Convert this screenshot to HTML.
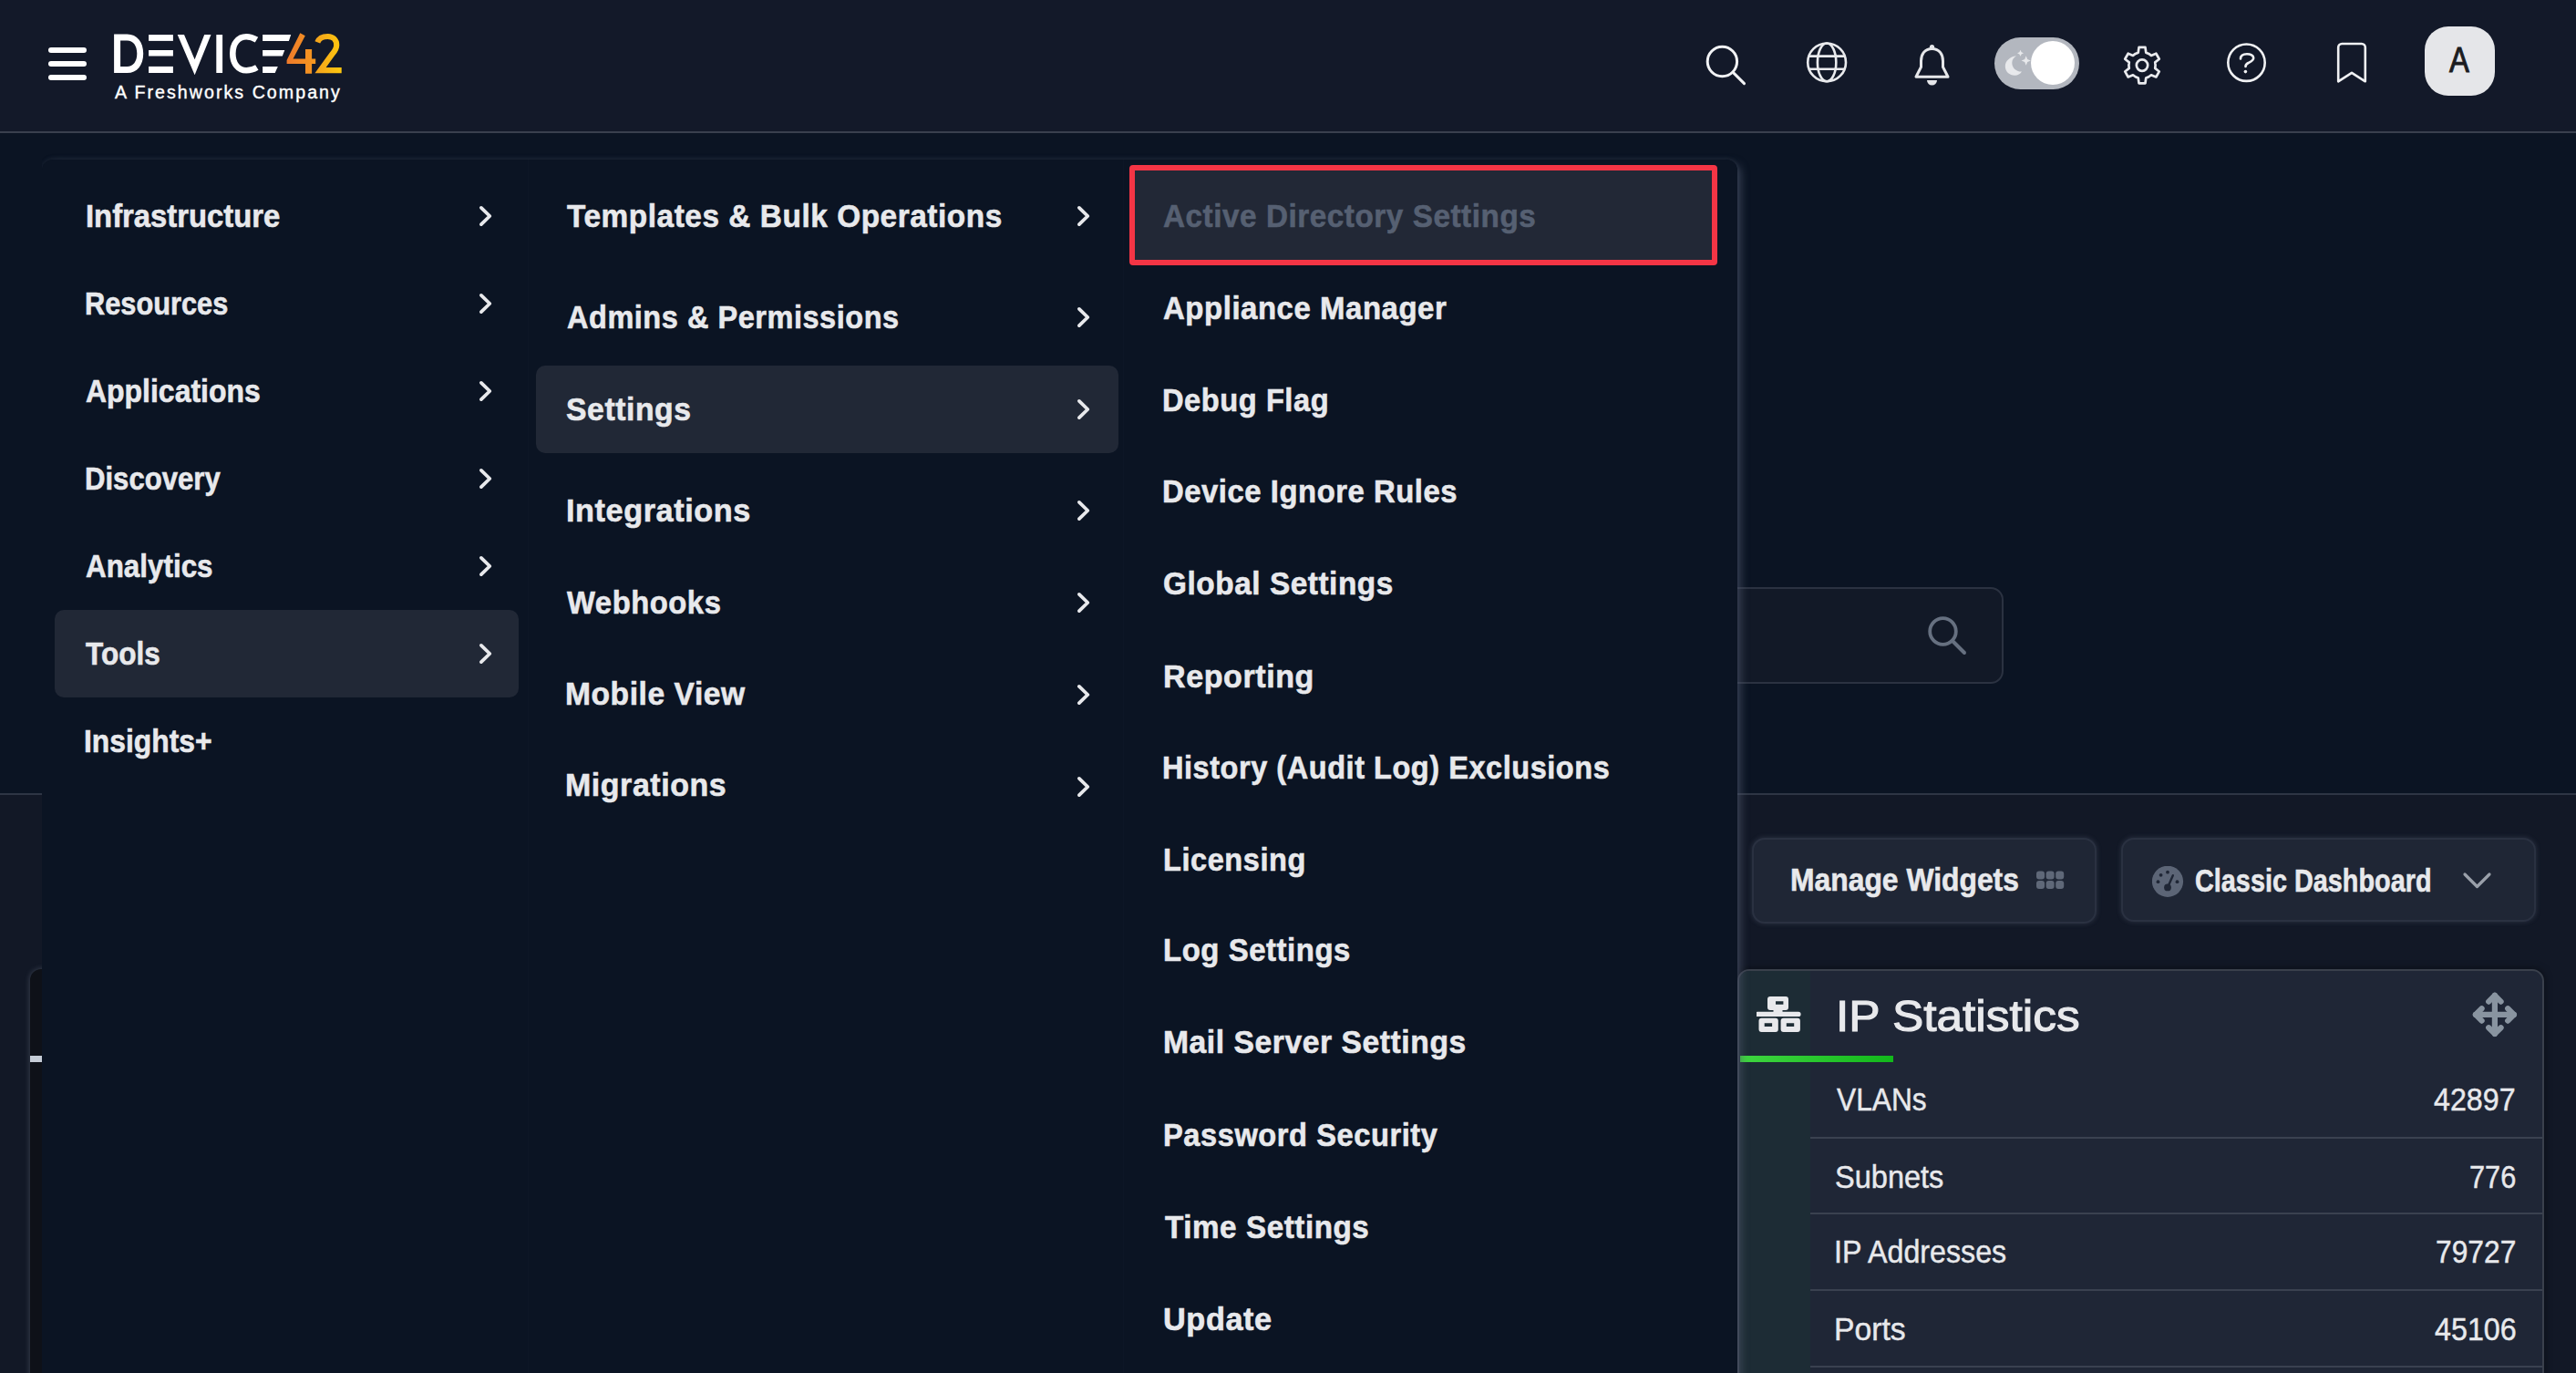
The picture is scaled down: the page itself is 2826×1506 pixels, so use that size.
<!DOCTYPE html>
<html><head><meta charset="utf-8"><title>Device42</title><style>
html,body{margin:0;padding:0}
body{width:2826px;height:1506px;overflow:hidden;position:relative;background:#0b1423;font-family:"Liberation Sans",sans-serif}
.a{position:absolute}
.t{position:absolute;white-space:nowrap;line-height:1;transform-origin:0 0}
</style></head><body>
<div class="a" style="left:0;top:0;width:2826px;height:144px;background:#131929"></div>
<div class="a" style="left:0;top:144px;width:2826px;height:2px;background:#3a404e"></div>
<div class="a" style="left:0;top:870px;width:2826px;height:2px;background:#2e3544"></div>
<div class="a" style="left:0;top:872px;width:2826px;height:634px;background:#121826"></div>
<div class="a" style="left:1500px;top:644px;width:694px;height:102px;background:#121927;border:2px solid #2b3241;border-radius:14px"></div>
<svg class="a" style="left:2105px;top:666px" width="60" height="60" viewBox="0 0 60 60"><circle cx="26.5" cy="26.5" r="14.3" fill="none" stroke="#667080" stroke-width="3.8"/><path d="M37 37 L50 50" stroke="#667080" stroke-width="4" stroke-linecap="round"/></svg>
<div class="a" style="left:1922px;top:919px;width:374px;height:90px;background:#1f2635;border:2px solid #2a3141;border-radius:14px;box-shadow:0 0 5px 1px rgba(110,120,140,.22)"></div>
<div class="a" style="left:2327px;top:919px;width:451px;height:88px;background:#1f2635;border:2px solid #2a3141;border-radius:14px;box-shadow:0 0 5px 1px rgba(110,120,140,.22)"></div>
<svg class="a" style="left:2233px;top:954px" width="34" height="24" viewBox="0 0 34 24"><rect x="1.0" y="1.5" width="9" height="9" rx="3" fill="#5f6878"/><rect x="11.6" y="1.5" width="9" height="9" rx="3" fill="#5f6878"/><rect x="22.2" y="1.5" width="9" height="9" rx="3" fill="#5f6878"/><rect x="1.0" y="12.0" width="9" height="9" rx="3" fill="#5f6878"/><rect x="11.6" y="12.0" width="9" height="9" rx="3" fill="#5f6878"/><rect x="22.2" y="12.0" width="9" height="9" rx="3" fill="#5f6878"/></svg>
<svg class="a" style="left:2361px;top:950px" width="35" height="35" viewBox="0 0 35 35"><circle cx="17" cy="16.8" r="17.1" fill="#5c6576"/><circle cx="17" cy="6.7" r="1.9" fill="#1f2635"/><circle cx="9.6" cy="9.8" r="1.9" fill="#1f2635"/><circle cx="6.5" cy="17.2" r="1.9" fill="#1f2635"/><circle cx="27.5" cy="17.2" r="1.9" fill="#1f2635"/><path d="M17 23.4 L22.8 10.2" stroke="#1f2635" stroke-width="2.4" stroke-linecap="round"/><circle cx="17" cy="23.4" r="3.9" fill="#1f2635"/></svg>
<svg class="a" style="left:2700px;top:952px" width="36" height="28" viewBox="0 0 36 28"><path d="M4 7 L17.5 20.5 L31 7" fill="none" stroke="#9aa0aa" stroke-width="3.2" stroke-linecap="round" stroke-linejoin="round"/></svg>
<div class="a" style="left:1906px;top:1063px;width:881px;height:520px;background:#1f2636;border:2px solid #3a404c;border-radius:13px;box-shadow:0 0 8px rgba(0,0,0,.5);overflow:hidden"><div class="a" style="left:0;top:0;width:78px;height:600px;background:#1d2c35"></div></div>
<div class="a" style="left:1909px;top:1158px;width:168px;height:7px;background:linear-gradient(90deg,#3fd640,#12b81b)"></div>
<svg class="a" style="left:1927px;top:1092px" width="50" height="41" viewBox="0 0 50 41"><path fill="#e8e9ec" fill-rule="evenodd" d="M18 1 h14 a3 3 0 0 1 3 3 v9 a3 3 0 0 1 -3 3 h-3.5 v1.8 h17.5 a2.6 2.6 0 0 1 0 5.2 h-45 a2.6 2.6 0 0 1 0 -5.2 h17.5 v-1.8 h-3.5 a3 3 0 0 1 -3 -3 v-9 a3 3 0 0 1 3 -3 z M21 6.3 v3.5 h8.4 v-3.5 z"/><path fill="#e8e9ec" fill-rule="evenodd" d="M5.5 24.8 h15.3 a3 3 0 0 1 3 3 v9.3 a3 3 0 0 1 -3 3 h-15.3 a3 3 0 0 1 -3 -3 v-9.3 a3 3 0 0 1 3 -3 z M8.7 30.3 v3.8 h8.4 v-3.8 z"/><path fill="#e8e9ec" fill-rule="evenodd" d="M29.6 24.8 h15.3 a3 3 0 0 1 3 3 v9.3 a3 3 0 0 1 -3 3 h-15.3 a3 3 0 0 1 -3 -3 v-9.3 a3 3 0 0 1 3 -3 z M32.8 30.3 v3.8 h8.4 v-3.8 z"/></svg>
<svg class="a" style="left:2710px;top:1086px" width="54" height="54" viewBox="0 0 54 54"><g fill="none" stroke="#8994a0" stroke-width="6.2" stroke-linecap="round" stroke-linejoin="round"><path d="M26.9 5.9 V47.9 M5.9 26.9 H47.9"/><path d="M20.2 12.6 L26.9 5.9 L33.6 12.6"/><path d="M20.2 41.2 L26.9 47.9 L33.6 41.2"/><path d="M12.6 20.2 L5.9 26.9 L12.6 33.6"/><path d="M41.2 20.2 L47.9 26.9 L41.2 33.6"/></g></svg>
<div class="a" style="left:1986px;top:1247px;width:803px;height:2px;background:#3a4150"></div>
<div class="a" style="left:1986px;top:1330px;width:803px;height:2px;background:#3a4150"></div>
<div class="a" style="left:1986px;top:1414px;width:803px;height:2px;background:#3a4150"></div>
<div class="a" style="left:1986px;top:1498px;width:803px;height:2px;background:#3a4150"></div>
<div class="t" style="left:1964.06px;top:947.95px;font-size:35.5px;font-weight:700;color:#e8e9ec;transform:scaleX(0.8968);-webkit-text-stroke:0.6px #e8e9ec">Manage Widgets</div>
<div class="t" style="left:2408.16px;top:948.75px;font-size:35.5px;font-weight:700;color:#e8e9ec;transform:scaleX(0.8119);-webkit-text-stroke:0.6px #e8e9ec">Classic Dashboard</div>
<div class="t" style="left:2013.82px;top:1090.57px;font-size:48px;font-weight:400;color:#e8e9ec;transform:scaleX(1.0710);-webkit-text-stroke:1.1px #e8e9ec">IP Statistics</div>
<div class="t" style="left:2014.50px;top:1188.37px;font-size:35px;font-weight:400;color:#e8e9ec;transform:scaleX(0.9052);-webkit-text-stroke:0.45px #e8e9ec">VLANs</div>
<div class="t" style="left:2013.49px;top:1272.67px;font-size:35px;font-weight:400;color:#e8e9ec;transform:scaleX(0.9295);-webkit-text-stroke:0.45px #e8e9ec">Subnets</div>
<div class="t" style="left:2012.49px;top:1355.37px;font-size:35px;font-weight:400;color:#e8e9ec;transform:scaleX(0.9201);-webkit-text-stroke:0.45px #e8e9ec">IP Addresses</div>
<div class="t" style="left:2012.38px;top:1439.67px;font-size:35px;font-weight:400;color:#e8e9ec;transform:scaleX(0.9637);-webkit-text-stroke:0.45px #e8e9ec">Ports</div>
<div class="t" style="left:2670.49px;top:1188.37px;font-size:35px;font-weight:400;color:#e8e9ec;transform:scaleX(0.9201);-webkit-text-stroke:0.45px #e8e9ec">42897</div>
<div class="t" style="left:2709.07px;top:1272.67px;font-size:35px;font-weight:400;color:#e8e9ec;transform:scaleX(0.8779);-webkit-text-stroke:0.45px #e8e9ec">776</div>
<div class="t" style="left:2672.01px;top:1355.37px;font-size:35px;font-weight:400;color:#e8e9ec;transform:scaleX(0.9074);-webkit-text-stroke:0.45px #e8e9ec">79727</div>
<div class="t" style="left:2671.00px;top:1439.67px;font-size:35px;font-weight:400;color:#e8e9ec;transform:scaleX(0.9221);-webkit-text-stroke:0.45px #e8e9ec">45106</div>
<div class="a" style="left:33px;top:1063px;width:300px;height:500px;background:#0e1118;border-radius:12px;box-shadow:0 0 6px rgba(200,210,230,.25)"></div>
<div class="a" style="left:33px;top:1158px;width:14px;height:7px;background:#c5ccd6"></div>
<div class="a" style="left:53px;top:52px;width:42px;height:6px;border-radius:3px;background:#ffffff"></div>
<div class="a" style="left:53px;top:67px;width:42px;height:6px;border-radius:3px;background:#ffffff"></div>
<div class="a" style="left:53px;top:82px;width:42px;height:6px;border-radius:3px;background:#ffffff"></div>
<svg class="a" style="left:120px;top:30px" width="260" height="60" viewBox="120 30 260 60">
<defs><linearGradient id="g4" x1="0" x2="1" y1="0" y2="0"><stop offset="0" stop-color="#ee7a2b"/><stop offset="1" stop-color="#f5981f"/></linearGradient>
<linearGradient id="g2" x1="0" x2="1" y1="0" y2="0"><stop offset="0" stop-color="#f5a51b"/><stop offset="1" stop-color="#fec80e"/></linearGradient></defs>
<path fill="#fff" fill-rule="evenodd" d="M125.1 37.4 H139.5 C150.5 37.4 157.2 46 157.2 58.7 C157.2 71.4 150.5 80 139.5 80 H125.1 Z M132.1 44.4 V72.9 H139.5 C146 72.9 150.3 67.5 150.3 58.7 C150.3 49.9 146 44.4 139.5 44.4 Z"/>
<rect x="163.1" y="38.1" width="26.8" height="6.8" fill="#fff"/>
<rect x="163.1" y="55" width="26.8" height="6.5" fill="#fff"/>
<rect x="163.1" y="72.9" width="26.8" height="7.1" fill="#fff"/>
<path fill="#fff" d="M194.7 38.1 H202 L213.6 65.3 L224.2 38.1 H231.5 L213.6 82.2 Z"/>
<rect x="237.3" y="38.1" width="6.8" height="41.9" fill="#fff"/>
<path fill="none" stroke="#fff" stroke-width="6.6" d="M281.5 43.6 C278 41.5 274.5 40.2 270.3 40.2 C261 40.2 255.3 48 255.3 58.7 C255.3 69.4 261 77.3 270.3 77.3 C274.5 77.3 278.5 76 281.8 74"/>
<path fill="#fff" d="M288.1 38.1 H319.2 L316.9 44.9 H288.1 Z"/>
<path fill="#fff" d="M288.1 55 H312.3 L309.8 61.5 H288.1 Z"/>
<path fill="#fff" d="M288.1 72.9 H304.8 L301.7 80 H288.1 Z"/>
<path fill="url(#g4)" d="M329.3 36.3 L334.8 39.3 L321.5 64.6 H335 V54 H342.1 V64.6 H346.2 V69.9 H342.1 V80.7 H335 V69.9 H314.6 V66 Z"/>
<path fill="none" stroke="url(#g2)" stroke-width="6.2" d="M348.3 46.3 C350 41.8 354.5 40 359.5 40 C365.5 40 369.2 44 369.2 49.5 C369.2 53.5 367 56.5 364.5 59.3 L351.5 77.2 H374.7"/>
</svg>
<div class="t" style="left:125.9px;top:92px;font-size:19.6px;font-weight:400;color:#fff;letter-spacing:2.05px;-webkit-text-stroke:0.4px #fff">A Freshworks Company</div>
<svg class="a" style="left:1865px;top:43px" width="56" height="56" viewBox="1865 43 56 56"><circle cx="1889.4" cy="67.5" r="16.2" fill="none" stroke="#f2f3f5" stroke-width="3"/><path d="M1901.5 79.6 L1913.5 91.6" stroke="#f2f3f5" stroke-width="3" stroke-linecap="round"/></svg>
<svg class="a" style="left:1978px;top:42px" width="52" height="52" viewBox="1978 42 52 52"><g fill="none" stroke="#e9eaed" stroke-width="2.6"><circle cx="2004.1" cy="68.4" r="20.9"/><ellipse cx="2004.1" cy="68.4" rx="10.2" ry="20.9"/><path d="M1984.5 61.6 H2023.7 M1984.5 75.8 H2023.7"/></g></svg>
<svg class="a" style="left:2096px;top:45px" width="48" height="52" viewBox="2096 45 48 52"><g fill="none" stroke="#e6e7ea" stroke-width="3" stroke-linejoin="round"><path d="M2119.5 53.5 C2111 53.5 2107.5 60 2107.5 67 V73.5 L2102 84.2 H2137 L2131.5 73.5 V67 C2131.5 60 2128 53.5 2119.5 53.5 Z"/></g><circle cx="2119.5" cy="51.5" r="2.6" fill="#e6e7ea"/><path d="M2114 88 A5.5 5.5 0 0 0 2125 88 Z" fill="#e6e7ea"/></svg>
<div class="a" style="left:2188px;top:41px;width:93px;height:57px;border-radius:28.5px;background:#b3b7bf"></div>
<div class="a" style="left:2228px;top:45px;width:48px;height:48px;border-radius:24px;background:#ffffff"></div>
<svg class="a" style="left:2195px;top:52px" width="36" height="36" viewBox="2195 52 36 36"><path fill="#e8e9ec" d="M2212 61.2 C2205 62 2199.8 67 2199.8 72.5 C2199.8 78.5 2204.6 82.8 2210.2 82.8 C2213.8 82.8 2216.5 81 2218 78.6 C2211.5 78.8 2207.3 74 2207.3 69 C2207.3 65.5 2209.2 62.8 2212 61.2 Z"/><path fill="#e8e9ec" d="M2216.5 54.8 L2217.6 57.2 L2220 58.3 L2217.6 59.4 L2216.5 61.8 L2215.4 59.4 L2213 58.3 L2215.4 57.2 Z"/><path fill="#e8e9ec" d="M2222.7 61.3 L2224.2 64.9 L2227.8 66.5 L2224.2 68.1 L2222.7 71.7 L2221.2 68.1 L2217.6 66.5 L2221.2 64.9 Z"/></svg>
<svg class="a" style="left:2322px;top:44px" width="56" height="56" viewBox="2322 44 56 56"><g fill="none" stroke="#e9eaed" stroke-width="2.7" stroke-linejoin="round"><path d="M2342.70 58.96 L2345.73 57.64 L2346.53 51.90 L2353.47 51.90 L2354.27 57.64 L2357.30 58.96 L2359.96 60.92 L2365.32 58.74 L2368.79 64.76 L2364.23 68.32 L2364.60 71.60 L2364.23 74.88 L2368.79 78.44 L2365.32 84.46 L2359.96 82.28 L2357.30 84.24 L2354.27 85.56 L2353.47 91.30 L2346.53 91.30 L2345.73 85.56 L2342.70 84.24 L2340.04 82.28 L2334.68 84.46 L2331.21 78.44 L2335.77 74.88 L2335.40 71.60 L2335.77 68.32 L2331.21 64.76 L2334.68 58.74 L2340.04 60.92 Z"/><circle cx="2350" cy="71.6" r="6.2"/></g></svg>
<svg class="a" style="left:2438px;top:42px" width="54" height="54" viewBox="2438 42 54 54"><g fill="none" stroke="#f0f1f3" stroke-width="2.6" stroke-linecap="round"><circle cx="2464.5" cy="68.7" r="20.2"/><path d="M2458 64.5 C2458 61 2461 59.2 2465 59.2 C2469 59.2 2472.2 61 2472.2 63.5 C2472.2 66.5 2469.5 67.5 2466.5 69 C2464.5 70 2463.5 71 2463.5 73"/></g><circle cx="2463.4" cy="78.6" r="1.8" fill="#f0f1f3"/></svg>
<svg class="a" style="left:2560px;top:43px" width="40" height="52" viewBox="2560 43 40 52"><path d="M2565.2 89.3 V52 A4 4 0 0 1 2569.2 48 H2590.8 A4 4 0 0 1 2594.8 52 V89.3 L2580 79.8 Z" fill="none" stroke="#f0f1f3" stroke-width="2.6" stroke-linejoin="round"/></svg>
<div class="a" style="left:2660px;top:29px;width:77px;height:76px;border-radius:26px;background:#e5e6e9"></div>
<div class="t" style="left:2687px;top:45.6px;font-size:39px;color:#1b1c1f;-webkit-text-stroke:1px #1b1c1f;transform:scaleX(.84)">A</div>
<div class="a" style="left:46px;top:175px;width:1860px;height:1400px;border-radius:12px;box-shadow:4px 4px 10px 0 rgba(80,90,112,.6),0 -1px 5px 0 rgba(80,90,112,.18);clip-path:inset(-40px -40px -40px 0)"></div>
<div class="a" style="left:46px;top:175px;width:1860px;height:1400px;background:#0b1423;border-radius:12px"></div>
<div class="a" style="left:579px;top:175px;width:1px;height:1331px;background:#0d1626"></div>
<div class="a" style="left:1232px;top:175px;width:1px;height:1331px;background:#0d1626"></div>
<div class="a" style="left:60px;top:669px;width:509px;height:96px;border-radius:10px;background:#212836"></div>
<div class="a" style="left:588px;top:401px;width:639px;height:96px;border-radius:10px;background:#212836"></div>
<div class="a" style="left:1239px;top:181px;width:633px;height:98px;border:6px solid #f43545;border-radius:4px;background:#222836"></div>
<div class="t" style="left:93.54px;top:219.75px;font-size:35.5px;font-weight:700;color:#e8e9ec;transform:scaleX(0.9242);-webkit-text-stroke:0.6px #e8e9ec">Infrastructure</div>
<svg class="a" style="left:523.9px;top:223.0px" width="20" height="28" viewBox="0 0 20 28"><path d="M3.9 4.9 L13.3 14 L3.9 23.1" fill="none" stroke="#e8e9ec" stroke-width="3.8" stroke-linecap="round" stroke-linejoin="round"/></svg>
<div class="t" style="left:93.27px;top:315.85px;font-size:35.5px;font-weight:700;color:#e8e9ec;transform:scaleX(0.8663);-webkit-text-stroke:0.6px #e8e9ec">Resources</div>
<svg class="a" style="left:523.9px;top:319.1px" width="20" height="28" viewBox="0 0 20 28"><path d="M3.9 4.9 L13.3 14 L3.9 23.1" fill="none" stroke="#e8e9ec" stroke-width="3.8" stroke-linecap="round" stroke-linejoin="round"/></svg>
<div class="t" style="left:93.59px;top:411.95px;font-size:35.5px;font-weight:700;color:#e8e9ec;transform:scaleX(0.9001);-webkit-text-stroke:0.6px #e8e9ec">Applications</div>
<svg class="a" style="left:523.9px;top:415.2px" width="20" height="28" viewBox="0 0 20 28"><path d="M3.9 4.9 L13.3 14 L3.9 23.1" fill="none" stroke="#e8e9ec" stroke-width="3.8" stroke-linecap="round" stroke-linejoin="round"/></svg>
<div class="t" style="left:93.25px;top:508.15px;font-size:35.5px;font-weight:700;color:#e8e9ec;transform:scaleX(0.8762);-webkit-text-stroke:0.6px #e8e9ec">Discovery</div>
<svg class="a" style="left:523.9px;top:511.4px" width="20" height="28" viewBox="0 0 20 28"><path d="M3.9 4.9 L13.3 14 L3.9 23.1" fill="none" stroke="#e8e9ec" stroke-width="3.8" stroke-linecap="round" stroke-linejoin="round"/></svg>
<div class="t" style="left:93.60px;top:603.95px;font-size:35.5px;font-weight:700;color:#e8e9ec;transform:scaleX(0.8841);-webkit-text-stroke:0.6px #e8e9ec">Analytics</div>
<svg class="a" style="left:523.9px;top:607.2px" width="20" height="28" viewBox="0 0 20 28"><path d="M3.9 4.9 L13.3 14 L3.9 23.1" fill="none" stroke="#e8e9ec" stroke-width="3.8" stroke-linecap="round" stroke-linejoin="round"/></svg>
<div class="t" style="left:94.20px;top:700.15px;font-size:35.5px;font-weight:700;color:#e8e9ec;transform:scaleX(0.8891);-webkit-text-stroke:0.6px #e8e9ec">Tools</div>
<svg class="a" style="left:523.9px;top:703.4px" width="20" height="28" viewBox="0 0 20 28"><path d="M3.9 4.9 L13.3 14 L3.9 23.1" fill="none" stroke="#e8e9ec" stroke-width="3.8" stroke-linecap="round" stroke-linejoin="round"/></svg>
<div class="t" style="left:92.41px;top:795.75px;font-size:35.5px;font-weight:700;color:#e8e9ec;transform:scaleX(0.8968);-webkit-text-stroke:0.6px #e8e9ec">Insights+</div>
<div class="t" style="left:622.01px;top:219.75px;font-size:35.5px;font-weight:700;color:#e8e9ec;transform:scaleX(0.9392);letter-spacing:0.6px;-webkit-text-stroke:0.6px #e8e9ec">Templates &amp; Bulk Operations</div>
<svg class="a" style="left:1179.8px;top:222.9px" width="20" height="28" viewBox="0 0 20 28"><path d="M3.9 4.9 L13.3 14 L3.9 23.1" fill="none" stroke="#e8e9ec" stroke-width="3.8" stroke-linecap="round" stroke-linejoin="round"/></svg>
<div class="t" style="left:622.03px;top:331.25px;font-size:35.5px;font-weight:700;color:#e8e9ec;transform:scaleX(0.9146);letter-spacing:0.6px;-webkit-text-stroke:0.6px #e8e9ec">Admins &amp; Permissions</div>
<svg class="a" style="left:1179.8px;top:334.1px" width="20" height="28" viewBox="0 0 20 28"><path d="M3.9 4.9 L13.3 14 L3.9 23.1" fill="none" stroke="#e8e9ec" stroke-width="3.8" stroke-linecap="round" stroke-linejoin="round"/></svg>
<div class="t" style="left:621.00px;top:431.75px;font-size:35.5px;font-weight:700;color:#e8e9ec;transform:scaleX(0.9500);letter-spacing:0.6px;-webkit-text-stroke:0.6px #e8e9ec">Settings</div>
<svg class="a" style="left:1179.8px;top:435.0px" width="20" height="28" viewBox="0 0 20 28"><path d="M3.9 4.9 L13.3 14 L3.9 23.1" fill="none" stroke="#e8e9ec" stroke-width="3.8" stroke-linecap="round" stroke-linejoin="round"/></svg>
<div class="t" style="left:620.56px;top:542.95px;font-size:35.5px;font-weight:700;color:#e8e9ec;transform:scaleX(0.9646);letter-spacing:0.6px;-webkit-text-stroke:0.6px #e8e9ec">Integrations</div>
<svg class="a" style="left:1179.8px;top:546.0px" width="20" height="28" viewBox="0 0 20 28"><path d="M3.9 4.9 L13.3 14 L3.9 23.1" fill="none" stroke="#e8e9ec" stroke-width="3.8" stroke-linecap="round" stroke-linejoin="round"/></svg>
<div class="t" style="left:622.00px;top:644.05px;font-size:35.5px;font-weight:700;color:#e8e9ec;transform:scaleX(0.9225);letter-spacing:0.6px;-webkit-text-stroke:0.6px #e8e9ec">Webhooks</div>
<svg class="a" style="left:1179.8px;top:646.9px" width="20" height="28" viewBox="0 0 20 28"><path d="M3.9 4.9 L13.3 14 L3.9 23.1" fill="none" stroke="#e8e9ec" stroke-width="3.8" stroke-linecap="round" stroke-linejoin="round"/></svg>
<div class="t" style="left:620.01px;top:743.75px;font-size:35.5px;font-weight:700;color:#e8e9ec;transform:scaleX(0.9452);letter-spacing:0.6px;-webkit-text-stroke:0.6px #e8e9ec">Mobile View</div>
<svg class="a" style="left:1179.8px;top:747.9px" width="20" height="28" viewBox="0 0 20 28"><path d="M3.9 4.9 L13.3 14 L3.9 23.1" fill="none" stroke="#e8e9ec" stroke-width="3.8" stroke-linecap="round" stroke-linejoin="round"/></svg>
<div class="t" style="left:619.99px;top:844.45px;font-size:35.5px;font-weight:700;color:#e8e9ec;transform:scaleX(0.9555);letter-spacing:0.6px;-webkit-text-stroke:0.6px #e8e9ec">Migrations</div>
<svg class="a" style="left:1179.8px;top:849.0px" width="20" height="28" viewBox="0 0 20 28"><path d="M3.9 4.9 L13.3 14 L3.9 23.1" fill="none" stroke="#e8e9ec" stroke-width="3.8" stroke-linecap="round" stroke-linejoin="round"/></svg>
<div class="t" style="left:1276.01px;top:219.75px;font-size:35.5px;font-weight:700;color:#566072;transform:scaleX(0.9362);letter-spacing:0.6px;-webkit-text-stroke:0.6px #566072">Active Directory Settings</div>
<div class="t" style="left:1276.03px;top:320.95px;font-size:35.5px;font-weight:700;color:#e8e9ec;transform:scaleX(0.9275);letter-spacing:0.6px;-webkit-text-stroke:0.6px #e8e9ec">Appliance Manager</div>
<div class="t" style="left:1275.07px;top:422.05px;font-size:35.5px;font-weight:700;color:#e8e9ec;transform:scaleX(0.9192);letter-spacing:0.6px;-webkit-text-stroke:0.6px #e8e9ec">Debug Flag</div>
<div class="t" style="left:1275.26px;top:522.45px;font-size:35.5px;font-weight:700;color:#e8e9ec;transform:scaleX(0.9241);letter-spacing:0.6px;-webkit-text-stroke:0.6px #e8e9ec">Device Ignore Rules</div>
<div class="t" style="left:1276.02px;top:622.75px;font-size:35.5px;font-weight:700;color:#e8e9ec;transform:scaleX(0.9387);letter-spacing:0.6px;-webkit-text-stroke:0.6px #e8e9ec">Global Settings</div>
<div class="t" style="left:1275.97px;top:724.55px;font-size:35.5px;font-weight:700;color:#e8e9ec;transform:scaleX(0.9589);letter-spacing:0.6px;-webkit-text-stroke:0.6px #e8e9ec">Reporting</div>
<div class="t" style="left:1275.09px;top:824.75px;font-size:35.5px;font-weight:700;color:#e8e9ec;transform:scaleX(0.9153);letter-spacing:0.6px;-webkit-text-stroke:0.6px #e8e9ec">History (Audit Log) Exclusions</div>
<div class="t" style="left:1275.87px;top:925.55px;font-size:35.5px;font-weight:700;color:#e8e9ec;transform:scaleX(0.9170);letter-spacing:0.6px;-webkit-text-stroke:0.6px #e8e9ec">Licensing</div>
<div class="t" style="left:1275.85px;top:1025.45px;font-size:35.5px;font-weight:700;color:#e8e9ec;transform:scaleX(0.9271);letter-spacing:0.6px;-webkit-text-stroke:0.6px #e8e9ec">Log Settings</div>
<div class="t" style="left:1275.81px;top:1126.45px;font-size:35.5px;font-weight:700;color:#e8e9ec;transform:scaleX(0.9471);letter-spacing:0.6px;-webkit-text-stroke:0.6px #e8e9ec">Mail Server Settings</div>
<div class="t" style="left:1275.87px;top:1227.55px;font-size:35.5px;font-weight:700;color:#e8e9ec;transform:scaleX(0.9193);letter-spacing:0.6px;-webkit-text-stroke:0.6px #e8e9ec">Password Security</div>
<div class="t" style="left:1277.80px;top:1328.55px;font-size:35.5px;font-weight:700;color:#e8e9ec;transform:scaleX(0.9353);letter-spacing:0.6px;-webkit-text-stroke:0.6px #e8e9ec">Time Settings</div>
<div class="t" style="left:1275.76px;top:1429.65px;font-size:35.5px;font-weight:700;color:#e8e9ec;transform:scaleX(0.9667);letter-spacing:0.6px;-webkit-text-stroke:0.6px #e8e9ec">Update</div>
</body></html>
